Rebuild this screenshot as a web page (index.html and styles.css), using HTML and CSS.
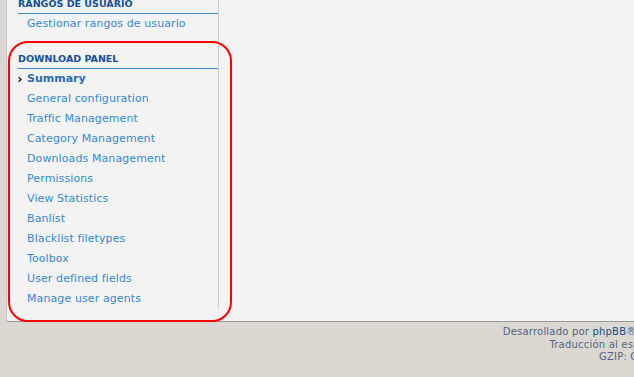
FILE: index.html
```html
<!DOCTYPE html>
<html lang="es">
<head>
    <meta charset="UTF-8">
    <title>Panel de administración</title>
    <link rel="stylesheet" href="styles.css">
</head>
<body>
    <div class="wrap">
        <div class="panel">
            <div class="menu">
                <p class="header">Rangos de usuario</p>
                <ul class="menu-list">
                    <li><a href="#">Gestionar rangos de usuario</a></li>
                </ul>

                <p class="header header-gap">Download Panel</p>
                <ul class="menu-list">
                    <li class="active">
                        <svg class="bullet" width="5" height="7" viewBox="0 0 5 7"><path d="M0.5 0.5 L4 3.5 L0.5 6.5 L0.5 5 L2.3 3.5 L0.5 2 Z" fill="#000"/></svg>
                        <a href="#">Summary</a>
                    </li>
                    <li><a href="#">General configuration</a></li>
                    <li><a href="#">Traffic Management</a></li>
                    <li><a href="#">Category Management</a></li>
                    <li><a href="#">Downloads Management</a></li>
                    <li><a href="#">Permissions</a></li>
                    <li><a href="#">View Statistics</a></li>
                    <li><a href="#">Banlist</a></li>
                    <li><a href="#">Blacklist filetypes</a></li>
                    <li><a href="#">Toolbox</a></li>
                    <li><a href="#">User defined fields</a></li>
                    <li><a href="#">Manage user agents</a></li>
                </ul>
            </div>
            <div class="main"></div>
        </div>

        <div class="footer">
            Desarrollado por <a href="#">phpBB</a>&reg; Forum Software &copy; phpBB Group<br>
            Traducción al español por phpBB España<br>
            GZIP: Off | Load: 0.23
        </div>
    </div>

    <!-- marca roja de la captura -->
    <div class="highlight"></div>
</body>
</html>
```

FILE: styles.css
```css
body {
    margin: 0;
    background-color: #dbd7d1;
    font-family: "DejaVu Sans", Verdana, sans-serif;
    overflow: hidden;
}

.wrap {
    width: 1298px;
    margin: -2px 0 0 6px;
}

.panel {
    display: flex;
    background-color: #f3f3f3;
    border-left: 1px solid #c8c8c8;
    border-bottom: 1px solid #9a9a9a;
    border-bottom-left-radius: 3px;
    padding-bottom: 12px;
}

.menu {
    width: 200px;
    padding-left: 11px;
    border-right: 1px solid #cfcfcf;
}

.main {
    flex-grow: 1;
}

.header {
    margin: 0;
    font-size: 9.5px;
    line-height: 12px;
    padding-bottom: 3px;
    font-weight: bold;
    text-transform: uppercase;
    color: #115098;
    border-bottom: 1px solid #368ad2;
}

.header-gap {
    margin-top: 19px;
}

.menu-list {
    list-style: none;
    margin: 0;
    padding: 0;
}

.menu-list li {
    position: relative;
    height: 20px;
    line-height: 20px;
    padding-left: 9px;
    font-size: 11px;
    letter-spacing: 0.1px;
}

.menu-list a {
    color: #368ad2;
    text-decoration: none;
}

.menu-list li.active a {
    color: #2a6db0;
    font-weight: bold;
    letter-spacing: 0;
}

.bullet {
    position: absolute;
    left: 0;
    top: 7px;
}

.footer {
    padding-top: 4px;
    text-align: center;
    font-size: 10px;
    line-height: 12.5px;
    letter-spacing: 0.2px;
    color: #536482;
}

.footer a {
    color: #105289;
    text-decoration: none;
}

.highlight {
    position: absolute;
    left: 8px;
    top: 41px;
    width: 224px;
    height: 281px;
    box-sizing: border-box;
    border: 2px solid #ff0000;
    border-radius: 20px;
}
```
